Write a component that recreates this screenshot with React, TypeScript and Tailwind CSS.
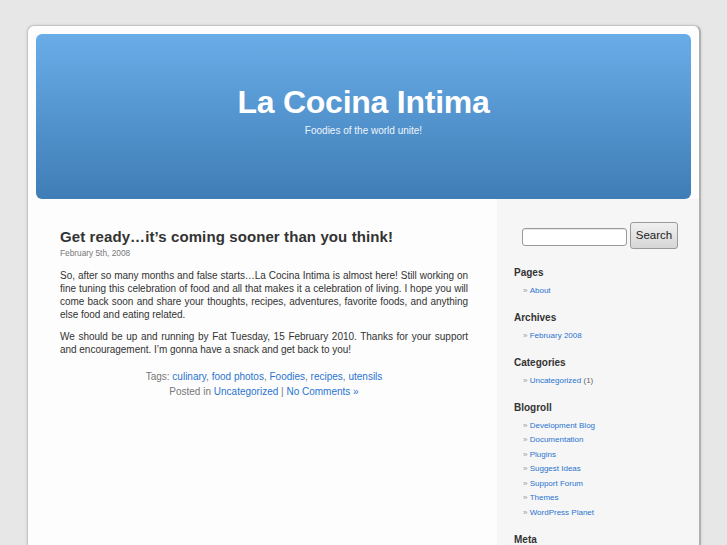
export default function App() {
  const blogroll = [
    "Development Blog",
    "Documentation",
    "Plugins",
    "Suggest Ideas",
    "Support Forum",
    "Themes",
    "WordPress Planet",
  ];

  return (
    <div className="h-[545px] overflow-hidden bg-[#e7e7e7] pt-[25px] font-['Liberation_Sans',Arial,sans-serif] text-[#333]">
      <div className="ml-[27px] flex h-[520px] w-[674px] flex-col rounded-t-[7px] border-l border-t border-r-2 border-l-[#c4c4c4] border-t-[#c4c4c4] border-r-[#b0b0b0] bg-[#fdfdfd] shadow-[0_0_3px_rgba(0,0,0,0.12)]">
        {/* Header */}
        <div className="px-[8px] pt-[8px]">
          <div className="flex h-[165px] flex-col items-center rounded-[6px] bg-gradient-to-b from-[#69ade8] to-[#3f7db6] pt-[50px] text-white">
            <h1 className="text-[32px] font-bold leading-[36px] tracking-[-0.25px]">La Cocina Intima</h1>
            <p className="mt-[4px] text-[10px] leading-[14px] text-[#eef4fb]">Foodies of the world unite!</p>
          </div>
        </div>

        <div className="flex flex-1">
          {/* Main column */}
          <div className="w-[469px] pl-[32px] pr-[29px] pt-[28px]">
            <h2 className="text-[15px] font-bold leading-[20px] tracking-[0.1px] text-[#333]">
              Get ready…it’s coming sooner than you think!
            </h2>
            <p className="text-[8.3px] leading-[12px] text-[#777]">February 5th, 2008</p>
            <div className="mt-[9.5px] text-justify text-[10px] leading-[13px] tracking-[-0.03px] text-[#333]">
              <p>
                So, after so many months and false starts…La Cocina Intima is almost here! Still working on fine
                tuning this celebration of food and all that makes it a celebration of living. I hope you will come
                back soon and share your thoughts, recipes, adventures, favorite foods, and anything else food and
                eating related.
              </p>
              <p className="mt-[9px]">
                We should be up and running by Fat Tuesday, 15 February 2010. Thanks for your support and
                encouragement. I’m gonna have a snack and get back to you!
              </p>
            </div>
            <div className="mt-[13px] text-center text-[10px] leading-[15px] text-[#777]">
              <p>
                Tags: <a className="text-[#2a74d0]">culinary</a>, <a className="text-[#2a74d0]">food photos</a>,{" "}
                <a className="text-[#2a74d0]">Foodies</a>, <a className="text-[#2a74d0]">recipes</a>,{" "}
                <a className="text-[#2a74d0]">utensils</a>
              </p>
              <p>
                Posted in <a className="text-[#2a74d0]">Uncategorized</a> |{" "}
                <a className="text-[#2a74d0]">No Comments »</a>
              </p>
            </div>
          </div>

          {/* Sidebar */}
          <div className="flex-1 bg-[#f6f6f6] pt-[23px]">
            <div className="ml-[25px] flex items-center gap-[3px]">
              <input
                type="text"
                className="mt-[2px] h-[18px] w-[105px] rounded-[3px] border border-[#9a9a9a] bg-white shadow-[inset_0_1px_1px_rgba(0,0,0,0.1)]"
              />
              <button className="h-[27px] w-[48px] rounded-[3px] border border-[#9a9a9a] bg-gradient-to-b from-[#f0f0f0] to-[#d6d6d6] text-[11.5px] text-[#222]">
                Search
              </button>
            </div>

            <div className="mt-[17px] pl-[17px]">
              <Section title="Pages">
                <Item>About</Item>
              </Section>
              <Section title="Archives">
                <Item>February 2008</Item>
              </Section>
              <Section title="Categories">
                <Item extra=" (1)">Uncategorized</Item>
              </Section>
              <Section title="Blogroll">
                {blogroll.map((b) => (
                  <Item key={b}>{b}</Item>
                ))}
              </Section>
              <Section title="Meta" />
            </div>
          </div>
        </div>
      </div>
    </div>
  );
}

function Section({ title, children }: { title: string; children?: React.ReactNode }) {
  return (
    <div className="mb-[12.75px]">
      <h2 className="mb-[3.75px] text-[10px] font-bold leading-[14px] text-[#333]">{title}</h2>
      {children && <ul className="pl-[9px]">{children}</ul>}
    </div>
  );
}

function Item({ children, extra }: { children: React.ReactNode; extra?: string }) {
  return (
    <li className="text-[8px] leading-[14.5px] text-[#999]">
      »&nbsp;<a className="text-[#2a74d0]">{children}</a>
      {extra && <span className="text-[#666]">{extra}</span>}
    </li>
  );
}
